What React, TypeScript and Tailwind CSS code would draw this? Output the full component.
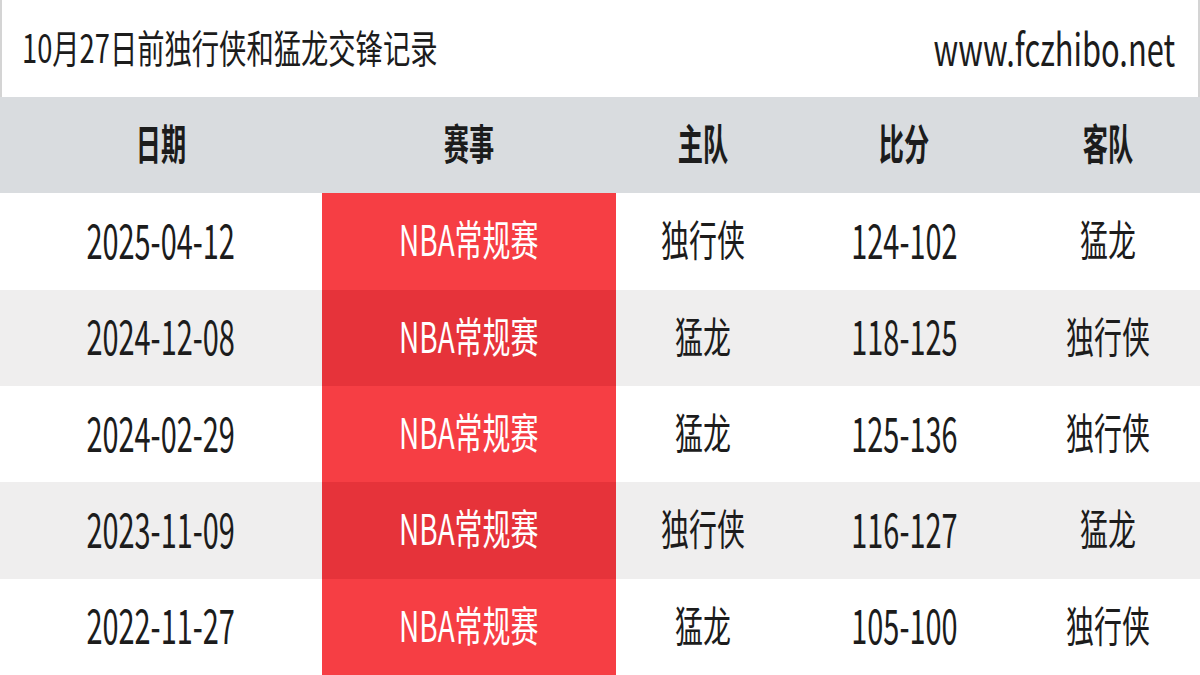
import React from 'react';

const ROWS = [
  { date: '2025-04-12', league: 'NBA常规赛', home: '独行侠', score: '124-102', away: '猛龙' },
  { date: '2024-12-08', league: 'NBA常规赛', home: '猛龙', score: '118-125', away: '独行侠' },
  { date: '2024-02-29', league: 'NBA常规赛', home: '猛龙', score: '125-136', away: '独行侠' },
  { date: '2023-11-09', league: 'NBA常规赛', home: '独行侠', score: '116-127', away: '猛龙' },
  { date: '2022-11-27', league: 'NBA常规赛', home: '猛龙', score: '105-100', away: '独行侠' },
];

const HEADS = ['日期', '赛事', '主队', '比分', '客队'];

const GRID = 'grid grid-cols-[322px_294px_175px_226px_183px]';

function Num({ children }: { children: React.ReactNode }) {
  return <span className="inline-block scale-x-[0.615] whitespace-nowrap text-[47px] leading-none">{children}</span>;
}

function Han({ children }: { children: React.ReactNode }) {
  return <span className="inline-block scale-x-[0.665] whitespace-nowrap text-[42px] leading-none">{children}</span>;
}

export default function App() {
  return (
    <div className="w-[1200px] h-[675px] overflow-hidden flex flex-col bg-white text-[#1c1c1c] font-['Noto_Sans_CJK_SC',sans-serif]">
      {/* title bar */}
      <div className="h-[97px] shrink-0 flex items-center justify-between border-x-2 border-[#d4d4d4] pl-[20px] pr-[23px] pb-[4px]">
        <span className="inline-block origin-left scale-x-[0.7] whitespace-nowrap text-[39px] leading-none">
          10月27日前独行侠和猛龙交锋记录
        </span>
        <span className="inline-block origin-right scale-x-[0.7] whitespace-nowrap text-[44px] leading-none">
          www.fczhibo.net
        </span>
      </div>

      {/* table head */}
      <div className={`${GRID} flex-1 bg-[#d9dcdf] font-bold`}>
        {HEADS.map((h) => (
          <div key={h} className="flex items-center justify-center pb-[6px]">
            <span className="inline-block scale-x-[0.6] whitespace-nowrap text-[42px] leading-none">{h}</span>
          </div>
        ))}
      </div>

      {ROWS.map((r, i) => {
        const odd = i % 2 === 1;
        return (
          <div key={i} className={`${GRID} flex-1 ${odd ? 'bg-[#efeeee]' : 'bg-white'}`}>
            <div className="flex items-center justify-center pb-[6px]">
              <Num>{r.date}</Num>
            </div>
            <div className={`flex items-center justify-center pb-[6px] text-white ${odd ? 'bg-[#e6333a]' : 'bg-[#f63e44]'}`}>
              <Han>{r.league}</Han>
            </div>
            <div className="flex items-center justify-center pb-[6px]">
              <Han>{r.home}</Han>
            </div>
            <div className="flex items-center justify-center pb-[6px]">
              <Num>{r.score}</Num>
            </div>
            <div className="flex items-center justify-center pb-[6px]">
              <Han>{r.away}</Han>
            </div>
          </div>
        );
      })}
    </div>
  );
}
